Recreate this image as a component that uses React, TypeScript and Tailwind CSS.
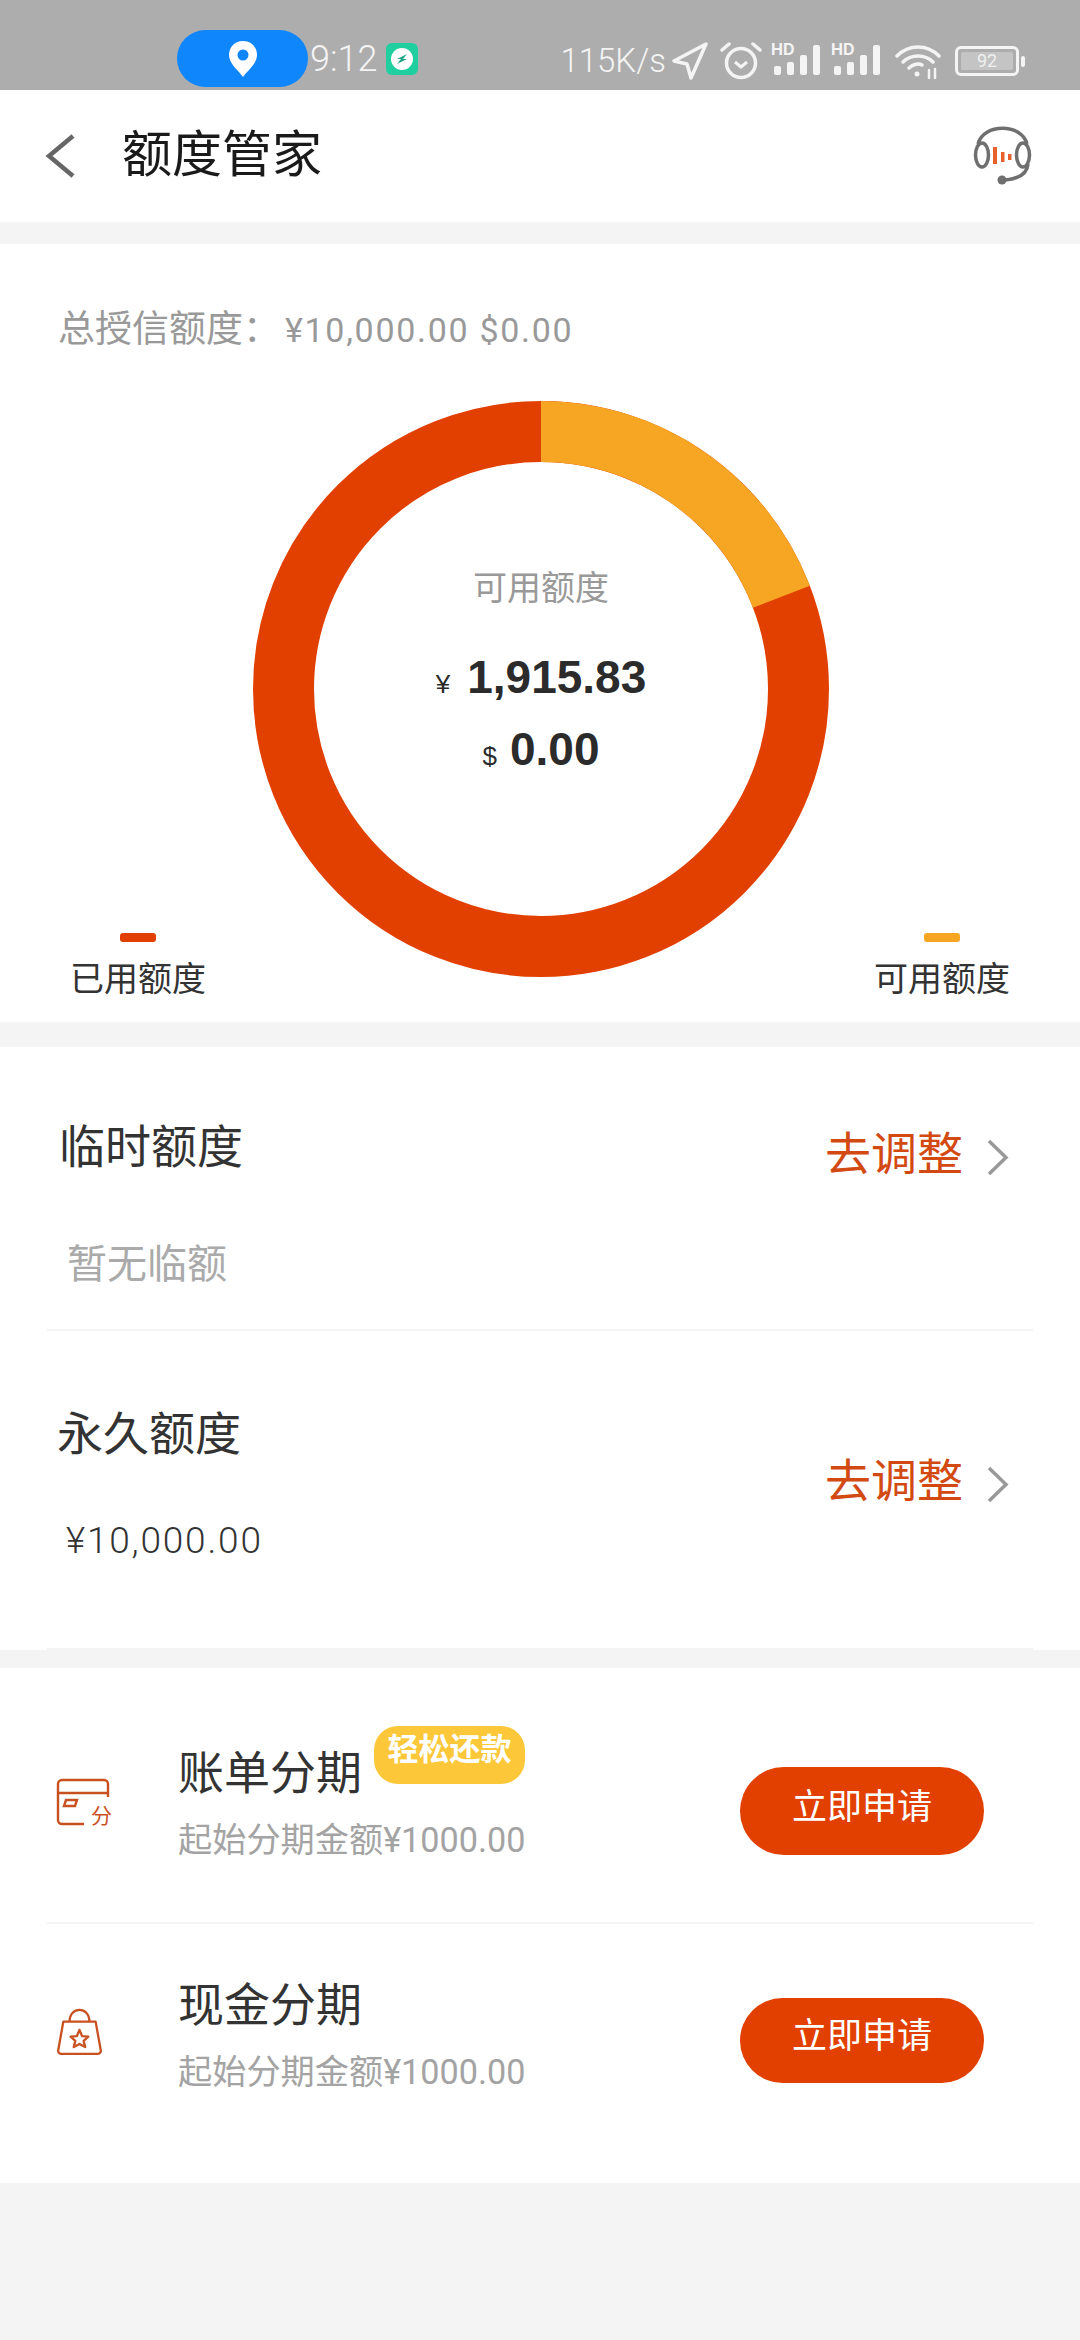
const rows = [
  { title: "账单分期", badge: "轻松还款", top: "pt-[75px]", btn: "mt-[24px] h-[88px]", iconTop: "mt-[34px]" },
  { title: "现金分期", badge: "", top: "pt-[51px]", btn: "mt-[23px] h-[85px]", iconTop: "mt-[32px]" },
];

function Signal({ className }: { className: string }) {
  return (
    <svg width="50" height="46" viewBox="0 0 50 46" fill="#f4f4f4" className={className}>
      <text x="0" y="17" fontSize="16" fontWeight="700" fontFamily="Inter, sans-serif">HD</text>
      <rect x="3" y="28" width="7" height="9" rx="2" />
      <rect x="16" y="24" width="7" height="13" rx="2" />
      <rect x="29" y="17" width="7" height="20" rx="2" />
      <rect x="42" y="7" width="7" height="30" rx="2" />
    </svg>
  );
}

function StatusIcons() {
  return (
    <div className="flex items-center">
      <svg width="36" height="38" viewBox="0 0 36 38" fill="none" stroke="#f4f4f4" strokeWidth="3.5" strokeLinejoin="round" className="ml-[6px]">
        <path d="M34 2 L2 19 L15 22 L19 36 Z" />
      </svg>
      <svg width="42" height="38" viewBox="0 0 42 38" fill="none" stroke="#f4f4f4" className="ml-[12px]">
        <circle cx="21" cy="21" r="14.5" strokeWidth="3.5" />
        <path d="M15 20 L21 25 L27 20" strokeWidth="3" />
        <path d="M2 8 L9 2 M40 8 L33 2" strokeWidth="3.5" strokeLinecap="round" />
      </svg>
      <Signal className="ml-[9px]" />
      <Signal className="ml-[10px]" />
      <svg width="46" height="36" viewBox="0 0 46 36" fill="none" stroke="#f4f4f4" strokeWidth="3.5" strokeLinecap="round" className="ml-[14px]">
        <path d="M2 13 C14 1 32 1 44 13" />
        <path d="M8 19 C16 11 30 11 38 19" />
        <path d="M14 25 C18 21 24 20 27 22" />
        <circle cx="22" cy="31" r="2.5" fill="#f4f4f4" stroke="none" />
        <path d="M34 27 V35 M40 26 V35" strokeWidth="2.5" />
      </svg>
      <div className="ml-[14px] flex h-[30px] w-[64px] items-center justify-center rounded-[6px] border-[3px] border-[#f4f4f4] p-[3px]">
        <div className="flex h-full w-full items-center justify-center rounded-[2px] bg-[#c4c4c4] text-[18px] leading-none text-[#f0f0f0]">92</div>
      </div>
      <div className="ml-[2px] h-[11px] w-[4px] rounded-[2px] bg-[#f4f4f4]" />
    </div>
  );
}

function Headset() {
  return (
    <svg width="85" height="80" viewBox="0 0 85 80" fill="none" stroke="#6f6f6f" strokeWidth="3.5">
      <ellipse cx="22" cy="39" rx="6.5" ry="12" />
      <ellipse cx="63" cy="39" rx="6.5" ry="12" />
      <path d="M18 28 C23 7 62 7 67 28" />
      <path d="M68 48 C67 60 56 63 45 64" />
      <circle cx="42" cy="64" r="4.5" fill="#6f6f6f" stroke="none" />
      <rect x="33" y="31" width="4" height="17" fill="#e8602c" stroke="none" />
      <rect x="41" y="36" width="3.5" height="10" fill="#e8602c" stroke="none" />
      <rect x="48" y="38" width="3.5" height="6" fill="#e8602c" stroke="none" />
    </svg>
  );
}

function CardIcon() {
  return (
    <svg width="60" height="50" viewBox="12 10 60 50" fill="none" stroke="#c9511f" strokeWidth="2.4">
      <path d="M64 30 V17 a4 4 0 0 0 -4 -4 H18 a4 4 0 0 0 -4 4 V53 a4 4 0 0 0 4 4 H40" />
      <path d="M14 26 H64" />
      <path d="M22 33 H33 L31 39 H20 Z" />
      <text x="47" y="56" fontSize="21" fill="#c9511f" stroke="none">分</text>
    </svg>
  );
}

function BagIcon() {
  return (
    <svg width="48" height="50" viewBox="13 5 46 48" fill="none" stroke="#c9511f" strokeWidth="2.2" strokeLinejoin="round">
      <path d="M26 19 C26 4 45 4 45 19" />
      <path d="M20 19 H51 L56 47 a3 3 0 0 1 -3 3 H18 a3 3 0 0 1 -3 -3 Z" />
      <path d="M35.5 27 L38 33 L44 33.5 L39.5 37.5 L41 43.5 L35.5 40.5 L30 43.5 L31.5 37.5 L27 33.5 L33 33 Z" />
    </svg>
  );
}

function Chevron() {
  return (
    <svg width="22" height="37" viewBox="0 0 22 37" fill="none" stroke="#999999" strokeWidth="3.5">
      <path d="M2 2 L19 18.5 L2 35" />
    </svg>
  );
}

export default function App() {
  return (
    <div className="flex h-[2340px] w-[1080px] flex-col overflow-hidden bg-[#f4f4f4] font-['Roboto','Noto_Sans_CJK_SC',sans-serif]">
      <div className="flex h-[90px] items-start bg-[#adadad] pt-[30px]">
        <div className="ml-[177px] flex h-[57px] w-[131px] items-center justify-center rounded-full bg-[#0f86fb]">
          <svg width="28" height="36" viewBox="0 0 28 36">
            <path d="M14 0 C6 0 0 6 0 14 C0 23 10 30 14 36 C18 30 28 23 28 14 C28 6 22 0 14 0 Z" fill="#ffffff" />
            <circle cx="14" cy="14" r="5.5" fill="#0f86fb" />
          </svg>
        </div>
        <span className="mt-[7px] ml-[2px] text-[36px] leading-[44px] font-light text-[#f4f4f4]">9:12</span>
        <div className="mt-[13px] ml-[9px] flex h-[32px] w-[32px] items-center justify-center rounded-[6px] bg-[#1fcfa0]">
          <div className="flex h-[22px] w-[22px] items-center justify-center rounded-full bg-white">
            <svg width="12" height="12" viewBox="0 0 12 12" fill="#1fa888">
              <path d="M11 1 L1 6 H5 L1 11 L11 6 H7 Z" />
            </svg>
          </div>
        </div>
        <div className="mt-[8px] ml-auto flex items-center pr-[55px]">
          <span className="text-[33px] leading-[40px] font-light text-[#f4f4f4]">115K/s</span>
          <StatusIcons />
        </div>
      </div>

      <div className="flex h-[132px] items-center bg-white pr-[35px] pl-[45px]">
        <svg width="30" height="44" viewBox="0 0 30 44" fill="none" stroke="#666666" strokeWidth="4.5">
          <path d="M28 2 L4 22 L28 42" />
        </svg>
        <h1 className="ml-[47px] pb-[3px] text-[50px] leading-[60px] text-[#1a1a1a]">额度管家</h1>
        <div className="ml-auto">
          <Headset />
        </div>
      </div>

      <section className="mt-[22px] h-[778px] bg-white">
        <p className="pt-[62px] pl-[58px] text-[34px] leading-[48px] text-[#999999]">
          <span className="text-[37px]">总授信额度：</span>
          <span className="ml-[5px] tracking-[1.7px]">¥10,000.00 $0.00</span>
        </p>
        <div className="relative mt-[46px] ml-[252px] h-[578px] w-[578px]">
          <svg width="578" height="578" viewBox="0 0 578 578">
            <circle cx="289" cy="289" r="257.5" fill="none" stroke="#e24000" strokeWidth="61" />
            <path d="M289 31.5 A257.5 257.5 0 0 1 529.4 196.7" fill="none" stroke="#f6a623" strokeWidth="61" />
          </svg>
          <div className="absolute inset-0 flex flex-col items-center pt-[166px]">
            <span className="text-[34px] leading-[44px] text-[#999999]">可用额度</span>
            <div className="mt-[39px] flex items-baseline font-['Liberation_Sans',sans-serif] leading-[56px] text-[#2b2b2b]">
              <span className="mr-[17px] text-[26px]">¥</span>
              <span className="text-[46px] font-bold">1,915.83</span>
            </div>
            <div className="mt-[9px] flex items-baseline font-['Liberation_Sans',sans-serif] leading-[56px] text-[#2b2b2b]">
              <span className="mr-[13px] text-[26px]">$</span>
              <span className="text-[46px] font-bold">0.00</span>
            </div>
          </div>
        </div>
        <div className="-mt-[45px] flex justify-between pr-[70px] pl-[70px] text-[34px] leading-[44px] text-[#333333]">
          {[
            ["已用额度", "bg-[#e24000]"],
            ["可用额度", "bg-[#f6a623]"],
          ].map(([label, color]) => (
            <div key={label} className="flex flex-col items-center">
              <div className={`h-[9px] w-[36px] rounded-[3px] ${color}`} />
              <span className="mt-[15px]">{label}</span>
            </div>
          ))}
        </div>
      </section>

      <section className="mt-[25px] h-[603px] bg-white">
        <div className="mx-[47px] flex h-[284px] justify-between border-b-2 border-[#f4f4f4] pr-[24px] pl-[12px]">
          <div className="pt-[70px]">
            <h2 className="text-[46px] leading-[60px] text-[#333333]">临时额度</h2>
            <p className="mt-[63px] ml-[8px] text-[40px] leading-[50px] text-[#aaaaaa]">暂无临额</p>
          </div>
          <div className="flex items-start gap-[24px] pt-[77px] text-[46px] leading-[60px] text-[#d24a12]">
            <span>去调整</span>
            <div className="mt-[15px]">
              <Chevron />
            </div>
          </div>
        </div>
        <div className="mx-[47px] flex h-[319px] justify-between border-b-2 border-[#f4f4f4] pr-[24px] pl-[10px]">
          <div className="pt-[73px]">
            <h2 className="text-[46px] leading-[60px] text-[#333333]">永久额度</h2>
            <p className="mt-[55px] ml-[9px] text-[37px] leading-[44px] font-light tracking-[1.8px] text-[#333333]">¥10,000.00</p>
          </div>
          <div className="flex items-start gap-[24px] pt-[120px] text-[46px] leading-[60px] text-[#d24a12]">
            <span>去调整</span>
            <div className="mt-[15px]">
              <Chevron />
            </div>
          </div>
        </div>
      </section>

      <section className="mt-[18px] h-[515px] bg-white">
        {rows.map((row, i) => (
          <div key={row.title} className={`mx-[47px] flex ${i === 0 ? "h-[256px] border-b-2 border-[#f4f4f4]" : "h-[259px]"}`}>
            <div className={`w-[131px] pl-[9px] ${row.top}`}>
              <div className={row.iconTop}>{i === 0 ? <CardIcon /> : <BagIcon />}</div>
            </div>
            <div className={row.top}>
              <div className="flex items-start">
                <h2 className="text-[46px] leading-[60px] text-[#333333]">{row.title}</h2>
                {row.badge && (
                  <span className="-mt-[17px] ml-[12px] flex h-[58px] w-[151px] items-center justify-center rounded-[24px] bg-[#fcc83a] pb-[10px] text-[31px] font-bold text-white">
                    {row.badge}
                  </span>
                )}
              </div>
              <p className="mt-[15px] text-[34.2px] leading-[44px] text-[#a3a3a3]">起始分期金额¥1000.00</p>
            </div>
            <div className={`mr-[49px] ml-auto ${row.top}`}>
              <button className={`flex w-[244px] items-center justify-center rounded-full bg-[#e24000] pb-[6px] text-[35px] text-white ${row.btn}`}>
                立即申请
              </button>
            </div>
          </div>
        ))}
      </section>
    </div>
  );
}
